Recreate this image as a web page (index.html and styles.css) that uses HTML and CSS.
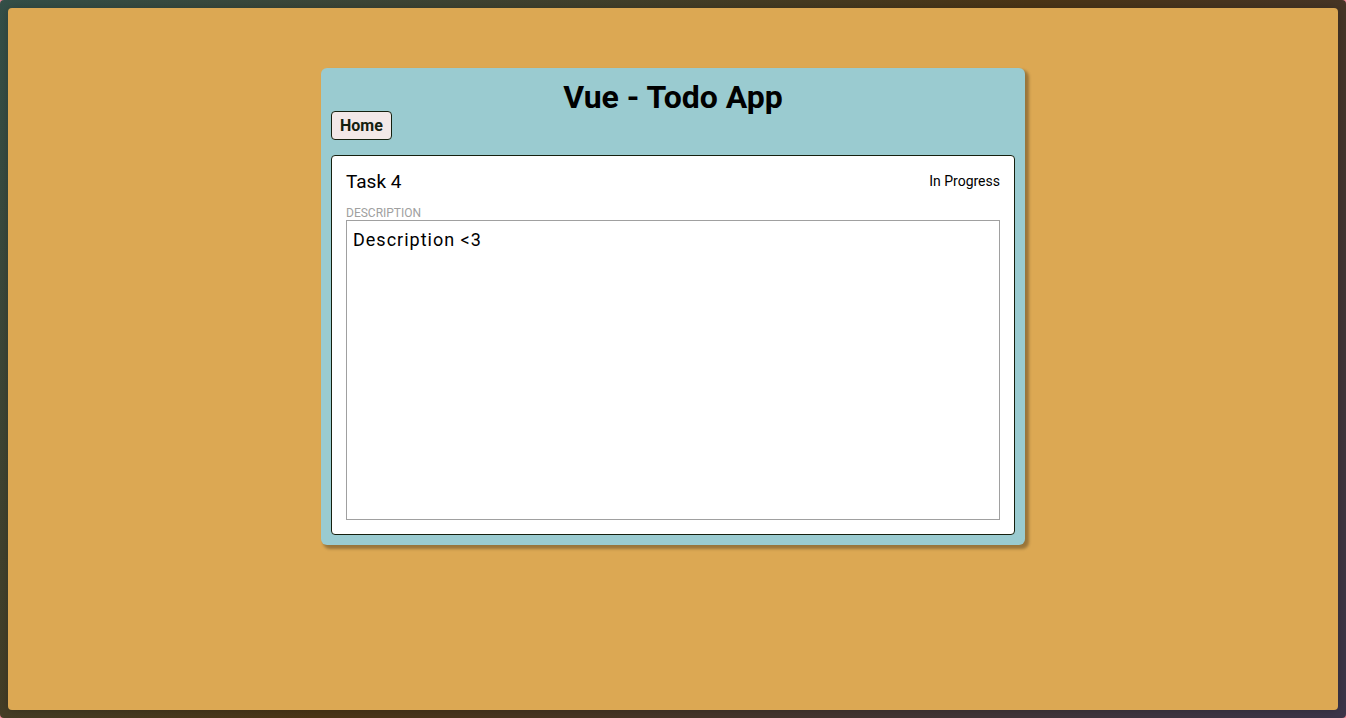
FILE: index.html
```html
<!DOCTYPE html>
<html lang="en">
<head>
<meta charset="utf-8">
<title>Vue - Todo App</title>
<link rel="stylesheet" href="styles.css">
</head>
<body>
<div class="frame">
  <div class="page">
    <main class="app">
      <h1 class="title">Vue - Todo App</h1>
      <nav class="nav"><a class="home" href="#">Home</a></nav>
      <section class="task">
        <header class="task-header">
          <h2 class="task-name">Task 4</h2>
          <span class="task-status">In Progress</span>
        </header>
        <label class="label" for="description">DESCRIPTION</label>
        <textarea class="description" id="description">Description &lt;3</textarea>
      </section>
    </main>
  </div>
</div>
</body>
</html>
```
FILE: styles.css
```css
* {
  box-sizing: border-box;
}

body {
  margin: 0;
  background: #f08c9c;
  font-family: Roboto, sans-serif;
  color: #000;
}

.frame {
  display: flex;
  min-height: 100vh;
  padding: 8px;
  border-radius: 4px;
  background: linear-gradient(135deg, #344f48, #4b3516 50%, #3b3549);
}

.page {
  flex: 1;
  padding: 60px 16px;
  border-radius: 4px;
  background: #dca853;
  box-shadow: 0 0 10px rgba(0, 0, 0, 0.2);
}

.app {
  max-width: 704px;
  margin: 0 auto;
  padding: 10px;
  border-radius: 6px;
  background: #9acbd0;
  box-shadow: 3px 3px 3px 1px rgba(0, 0, 0, 0.3);
}

.title {
  margin: 0;
  font-size: 32px;
  line-height: 38px;
  font-weight: 700;
  text-align: center;
}

.nav {
  display: flex;
  margin-top: -5px;
  margin-bottom: 15px;
}

.home {
  padding: 4px 8px;
  border: 1px solid #15200f;
  border-radius: 4px;
  background: #f2e8e8;
  color: #15200f;
  font-size: 16px;
  line-height: 19px;
  font-weight: 700;
  text-decoration: none;
}

.task {
  padding: 14px;
  border: 1px solid #15200f;
  border-radius: 4px;
  background: #fff;
}

.task-header {
  display: flex;
  justify-content: space-between;
  align-items: center;
  margin-bottom: 13px;
}

.task-name {
  margin: 0;
  font-size: 19px;
  line-height: 23px;
  font-weight: 400;
}

.task-status {
  font-size: 14px;
  line-height: 23px;
}

.label {
  display: block;
  color: #a0a0a0;
  font-size: 12px;
  line-height: 14px;
}

.description {
  display: block;
  width: 100%;
  height: 300px;
  padding: 8px 6px;
  border: 1px solid #a0a0a0;
  border-radius: 0;
  outline: none;
  resize: none;
  background: #fff;
  color: #000;
  font-family: Roboto, sans-serif;
  font-size: 18px;
  line-height: 22px;
  letter-spacing: 1px;
}
```
